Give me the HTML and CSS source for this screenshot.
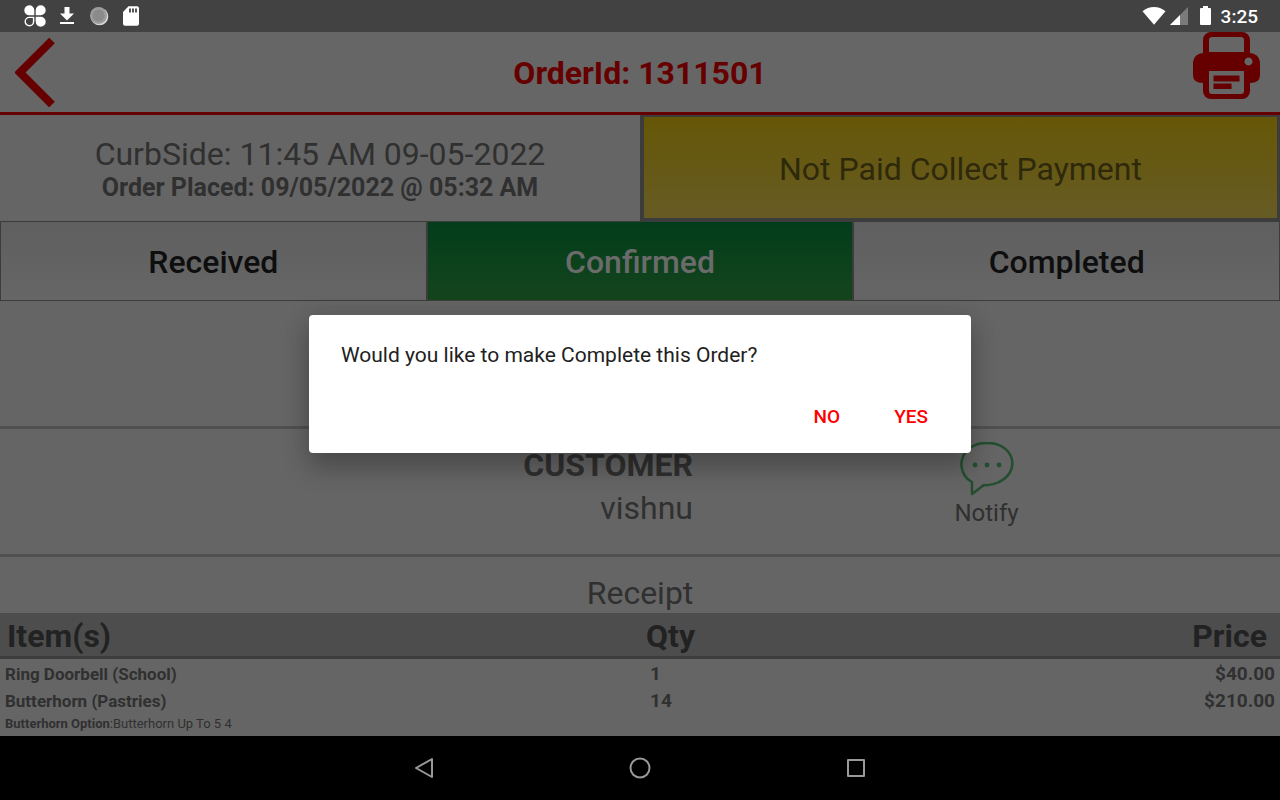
FILE: index.html
```html
<!DOCTYPE html>
<html lang="en">
<head>
<meta charset="utf-8">
<meta name="viewport" content="width=device-width, initial-scale=1">
<title>OrderId: 1311501</title>
<link rel="stylesheet" href="styles.css">
</head>
<body>
<div class="statusbar">
  <svg class="status-icon" width="24" height="24" viewBox="0 0 24 24" fill="#fff"><path d="M11.3 11.3H6.5a5 5 0 1 1 4.8-5zM12.7 11.3V6.300a5 5 0 1 1 5 5zM12.700 12.700h5a5 5 0 1 1-5 5z"/><path d="M10.600 13.400H6.400a4.200 4.200 0 1 0 4.200 4.200z" fill="none" stroke="#fff" stroke-width="1.400"/></svg>
  <svg class="status-icon" width="24" height="24" viewBox="0 0 24 24" fill="#fff"><path d="M9.500 3h5v6.500H19L12 16.500 5 9.500h4.500zM5 18h14v2H5z"/></svg>
  <svg class="status-icon" width="24" height="24" viewBox="0 0 24 24"><circle cx="12.500" cy="12.500" r="8.800" fill="#d8d8d8"/><circle cx="11.500" cy="11.500" r="8.500" fill="#9d9d9d"/><circle cx="11.500" cy="11.500" r="6" fill="#8b8b8b"/></svg>
  <svg class="status-icon" width="24" height="24" viewBox="0 0 24 24"><path d="M9.500 2.300H18a2 2 0 0 1 2 2v15.500a2 2 0 0 1-2 2H6a2 2 0 0 1-2-2V8z" fill="#fff"/><path d="M10 4.500h2v4h-2zM13 4.500h2v4h-2zM16 4.500h2v4h-2z" fill="#555"/></svg>
  <div class="status-right">
    <svg width="24" height="20" viewBox="0 0 24 20" fill="#fff"><path d="M.500 5.300C7-.600 17-.600 23.500 5.300L12 18.800z"/></svg>
    <svg width="18" height="18" viewBox="0 0 18 18"><path d="M18 0v18H0z" fill="#7b7b7b"/><path d="M10 8v10H0z" fill="#fff"/></svg>
    <svg class="battery" width="11" height="20" viewBox="0 0 11 20" fill="#fff"><path d="M3 0h5v2h2a1 1 0 0 1 1 1v15a1 1 0 0 1-1 1H1a1 1 0 0 1-1-1V3a1 1 0 0 1 1-1h2z"/></svg>
    <span class="clock">3:25</span>
  </div>
</div>
<main class="app">
  <header class="header">
    <button class="icon-button" aria-label="Back"><svg width="40" height="70" viewBox="0 0 40 70"><path d="M37 3.500L5 35.500l32 32" fill="none" stroke="#600" stroke-width="8"/></svg></button>
    <h1 class="title">OrderId: 1311501</h1>
    <button class="icon-button print" aria-label="Print"><svg width="67" height="67" viewBox="0 0 67 67"><path fill="#600" fill-rule="evenodd" d="M10 21V8a8 8 0 0 1 8-8h31a8 8 0 0 1 8 8v13a10 10 0 0 1 10 9v13q0 8-10 8v8a8 8 0 0 1-8 8H18a8 8 0 0 1-8-8v-8Q0 51 0 43V30a10 10 0 0 1 10-9zM16 20h35V8q0-3-3-3H19q-3 0-3 3zM16 39v20q0 3 3 3h29q3 0 3-3V39zM55.500 25.500a4 4 0 1 0 .01 0zM20.500 43.500h26v6h-26zM20.500 51.500h18v5.500h-18z"/></svg></button>
  </header>
  <section class="summary">
    <div class="schedule">
      <div class="slot">CurbSide: 11:45 AM 09-05-2022</div>
      <div class="placed">Order Placed: 09/05/2022 @ 05:32 AM</div>
    </div>
    <button class="payment">Not Paid Collect Payment</button>
  </section>
  <nav class="tabs">
    <button class="tab">Received</button>
    <button class="tab tab-active">Confirmed</button>
    <button class="tab">Completed</button>
  </nav>
  <div class="spacer"></div>
  <section class="customer">
    <div class="person"><h2 class="person-label">CUSTOMER</h2><div class="person-name">vishnu</div></div>
    <button class="notify">
      <svg width="54" height="54" viewBox="0 0 54 54"><path d="M12 52V40C-6 30-1 1 27 1s34 29 12 39q-8 4-15 3z" fill="none" stroke="#234f30" stroke-width="2.500" stroke-linejoin="round"/><g fill="#234f30"><circle cx="15" cy="23" r="2.400"/><circle cx="27" cy="23" r="2.400"/><circle cx="39" cy="23" r="2.400"/></g></svg>
      <span>Notify</span>
    </button>
  </section>
  <h2 class="receipt-title">Receipt</h2>
  <table class="receipt">
    <thead><tr><th class="col-item">Item(s)</th><th class="col-qty">Qty</th><th class="col-price">Price</th></tr></thead>
    <tbody>
      <tr><td>Ring Doorbell (School)</td><td class="qty">1</td><td class="price">$40.00</td></tr>
      <tr><td>Butterhorn (Pastries)</td><td class="qty">14</td><td class="price">$210.00</td></tr>
      <tr><td class="option" colspan="3"><b>Butterhorn Option</b>:Butterhorn Up To 5 4</td></tr>
    </tbody>
  </table>
  <div class="dialog" role="alertdialog" aria-labelledby="dialog-message">
    <p class="dialog-message" id="dialog-message">Would you like to make Complete this Order?</p>
    <div class="dialog-actions"><button class="dialog-button">NO</button><button class="dialog-button">YES</button></div>
  </div>
</main>
<footer class="navbar">
  <button class="nav-button" aria-label="Back"><svg width="24" height="24" viewBox="0 0 24 24"><path d="M20 3v18L4 12z"/></svg></button>
  <button class="nav-button" aria-label="Home"><svg width="24" height="24" viewBox="0 0 24 24"><circle cx="12" cy="12" r="9.500"/></svg></button>
  <button class="nav-button" aria-label="Recent apps"><svg width="24" height="24" viewBox="0 0 24 24"><path d="M4 4h16v16H4z"/></svg></button>
</footer>
</body>
</html>
```

FILE: styles.css
```css
* { box-sizing: border-box; }
body {
  margin: 0;
  min-height: 100vh;
  display: flex;
  flex-direction: column;
  background: #656565;
  color: #303030;
  font-family: Roboto, sans-serif;
}
button {
  margin: 0;
  padding: 0;
  border: 0;
  background: none;
  color: inherit;
  font: inherit;
}
svg { display: block; }
h1, h2, p { margin: 0; }
.statusbar {
  display: flex;
  align-items: center;
  gap: 8px;
  height: 32px;
  padding: 0 22px 0 23px;
  background: #424242;
  color: #fff;
}
.status-right {
  display: flex;
  align-items: center;
  gap: 4px;
  margin-left: auto;
}
.battery { margin: 0 6px 0 8px; }
.clock { font-size: 19px; font-weight: 500; }
.app {
  position: relative;
  flex: 1;
  display: flex;
  flex-direction: column;
}
.header {
  display: grid;
  grid-template-columns: 1fr auto 1fr;
  align-items: center;
  height: 83px;
  padding: 0 15px;
  border-bottom: 3px solid #600;
  background: #666;
}
.title { padding-top: 2px; color: #600; font-size: 32px; font-weight: 700; }
.icon-button { justify-self: start; }
.print { justify-self: end; align-self: start; margin-right: 5px; }
.summary {
  display: grid;
  grid-template-columns: 1fr 1fr;
  height: 106px;
}
.schedule {
  display: flex;
  flex-direction: column;
  justify-content: center;
  padding-top: 2px;
  text-align: center;
}
.slot { font-size: 32px; line-height: 38px; }
.placed { font-size: 25px; line-height: 30px; font-weight: 700; }
.payment {
  padding-top: 2px;
  border: 3px solid #3c3c3c;
  border-width: 2px 3px 3px 4px;
  background: linear-gradient(#665707, #665b24);
  color: #2f290c;
  font-size: 32px;
}
.tabs {
  display: grid;
  grid-template-columns: repeat(3, 1fr);
  height: 80px;
}
.tab {
  padding-top: 2px;
  border: 1px solid #3c3c3c;
  background: linear-gradient(#5f5f5f, #666);
  color: #0e0e0e;
  font-size: 32px;
  font-weight: 500;
}
.tab-active {
  background: linear-gradient(#023d1b, #15451d);
  color: #6b6b6b;
}
.spacer { height: 125px; }
.customer {
  display: grid;
  grid-template-columns: 693fr 587fr;
  padding-top: 13px;
  height: 131px;
  border-top: 3px solid #505050;
  border-bottom: 3px solid #505050;
}
.person { text-align: right; padding-top: 4px; }
.person-label { font-size: 32px; line-height: 38px; }
.person-name { padding-top: 5px; font-size: 32px; line-height: 38px; }
.notify {
  display: flex;
  flex-direction: column;
  align-items: center;
  font-size: 24px;
  line-height: 34px;
}
.receipt-title {
  padding: 17px 0 1px;
  font-size: 32px;
  line-height: 38px;
  font-weight: 400;
  text-align: center;
}
.receipt {
  width: 100%;
  table-layout: fixed;
  border-collapse: separate;
  border-spacing: 0;
}
.receipt th {
  height: 46px;
  padding: 2px 7px 0;
  border-bottom: 3px solid #3c3c3c;
  background: #4d4d4d;
  color: #222;
  font-size: 32px;
  line-height: 38px;
  text-align: left;
}
.receipt td {
  padding: 3px 5px 0;
  font-size: 17px;
  line-height: 24px;
  font-weight: 700;
}
.receipt .col-item { width: 50%; }
.receipt .col-qty { width: 25%; padding-left: 6px; }
.receipt .col-price { padding-right: 13px; text-align: right; }
.receipt .qty { padding-left: 10px; font-size: 19px; }
.receipt .price { font-size: 19px; text-align: right; }
.receipt .option { padding-top: 0; font-size: 13px; line-height: 22px; font-weight: 400; }
.dialog {
  position: absolute;
  top: 50%;
  left: 50%;
  transform: translate(-50%, -50%);
  width: 662px;
  max-width: 92%;
  padding: 26px 26px 13px 32px;
  border-radius: 4px;
  background: #fff;
  color: #212121;
  box-shadow: 0 16px 26px rgba(0, 0, 0, .22), 0 0 28px rgba(0, 0, 0, .12);
}
.dialog-message { font-size: 21px; line-height: 28px; }
.dialog-actions {
  display: flex;
  justify-content: flex-end;
  gap: 20px;
  margin-top: 23px;
}
.dialog-button {
  height: 48px;
  padding: 0 17px;
  color: #f00;
  font-size: 19px;
  font-weight: 500;
}
.navbar {
  display: flex;
  justify-content: center;
  align-items: center;
  gap: 192px;
  height: 64px;
  background: #000;
}
.nav-button svg { fill: none; stroke: #999; stroke-width: 2; stroke-linejoin: round; }
```
